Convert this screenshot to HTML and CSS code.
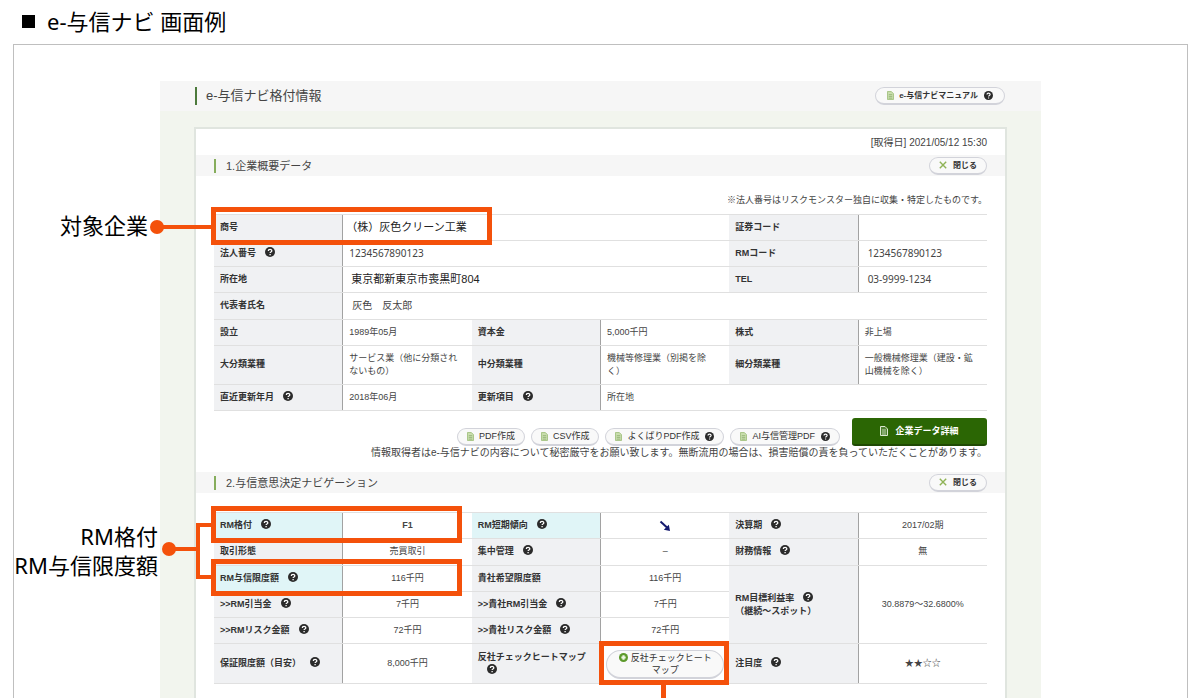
FILE: index.html
```html
<!DOCTYPE html>
<html lang="ja">
<head>
<meta charset="utf-8">
<meta name="viewport" content="width=device-width, initial-scale=1">
<title>e-与信ナビ 画面例</title>
<link rel="stylesheet" href="styles.css">
</head>
<body>
<svg class="defs" aria-hidden="true">
  <symbol id="help" viewBox="0 0 10 10"><circle cx="5" cy="5" r="5" fill="#2b2b2b"/><path d="M3.3 4C3.3 1.9 6.8 1.9 6.8 3.9C6.8 5 5.1 5 5.1 6.1M5.1 7.1V8.3" fill="none" stroke="#fff" stroke-width="1.3"/></symbol>
  <symbol id="doc" viewBox="0 0 8 10"><path d="M0.5 0.5H5L7.5 3V9.5H0.5Z" fill="#c9deae" stroke="#9fbf7c"/><path d="M2 4H6M2 6H6M2 8H6" stroke="#86a968" stroke-width="0.8"/></symbol>
  <symbol id="doc-light" viewBox="0 0 8 10"><path d="M0.5 0.5H5L7.5 3V9.5H0.5Z" fill="#4f8130" stroke="#dbe8d0"/><path d="M2 4H6M2 6H6M2 8H6" stroke="#dbe8d0" stroke-width="0.8"/></symbol>
  <symbol id="cross" viewBox="0 0 8 8"><path d="M0.8 0.8L7.2 7.2M7.2 0.8L0.8 7.2" stroke="#8fb356" stroke-width="1.4"/></symbol>
</svg>

<h1 class="page-title">e-与信ナビ 画面例</h1>

<div class="frame">
  <main class="screen">
    <header class="screen-head">
      <h2 class="screen-title">e-与信ナビ格付情報</h2>
      <button class="pill small" type="button"><svg class="doc"><use href="#doc"/></svg><b>e-与信ナビマニュアル</b><svg class="help"><use href="#help"/></svg></button>
    </header>

    <div class="panel">
      <p class="acquired">[取得日] 2021/05/12 15:30</p>

      <section>
        <header class="section-head">
          <h3 class="section-title">1.企業概要データ</h3>
          <button class="pill small close" type="button"><svg class="cross"><use href="#cross"/></svg><b>閉じる</b></button>
        </header>
        <div class="section-body">
          <p class="note number-note">※法人番号はリスクモンスター独自に収集・特定したものです。</p>
          <div class="annotated">
            <table class="data company">
              <colgroup><col><col><col><col><col><col></colgroup>
              <tr><th scope="row">商号</th><td colspan="3" class="name">（株）灰色クリーン工業</td><th scope="row">証券コード</th><td></td></tr>
              <tr><th scope="row">法人番号<svg class="help"><use href="#help"/></svg></th><td colspan="3" class="code">1234567890123</td><th scope="row">RMコード</th><td class="code inset">1234567890123</td></tr>
              <tr><th scope="row">所在地</th><td colspan="3" class="address">東京都新東京市喪黒町804</td><th scope="row">TEL</th><td class="code inset">03-9999-1234</td></tr>
              <tr><th scope="row">代表者氏名</th><td colspan="5" class="code person">灰色　反太郎</td></tr>
              <tr><th scope="row">設立</th><td>1989年05月</td><th scope="row">資本金</th><td>5,000千円</td><th scope="row">株式</th><td>非上場</td></tr>
              <tr class="two-line"><th scope="row">大分類業種</th><td>サービス業（他に分類されないもの）</td><th scope="row">中分類業種</th><td>機械等修理業（別掲を除く）</td><th scope="row">細分類業種</th><td>一般機械修理業（建設・鉱山機械を除く）</td></tr>
              <tr><th scope="row">直近更新年月<svg class="help"><use href="#help"/></svg></th><td>2018年06月</td><th scope="row">更新項目<svg class="help"><use href="#help"/></svg></th><td colspan="3">所在地</td></tr>
            </table>
            <div class="mark mark-company"></div>
            <div class="lead lead-company"></div>
            <p class="label label-company">対象企業</p>
          </div>

          <div class="actions">
            <button class="pill" type="button"><svg class="doc"><use href="#doc"/></svg>PDF作成</button>
            <button class="pill" type="button"><svg class="doc"><use href="#doc"/></svg>CSV作成</button>
            <button class="pill" type="button"><svg class="doc"><use href="#doc"/></svg>よくばりPDF作成<svg class="help"><use href="#help"/></svg></button>
            <button class="pill" type="button"><svg class="doc"><use href="#doc"/></svg>AI与信管理PDF<svg class="help"><use href="#help"/></svg></button>
            <button class="primary" type="button"><svg class="doc"><use href="#doc-light"/></svg>企業データ詳細</button>
          </div>
          <p class="note notice">情報取得者はe-与信ナビの内容について秘密厳守をお願い致します。無断流用の場合は、損害賠償の責を負っていただくことがあります。</p>
        </div>
      </section>

      <section class="decision">
        <header class="section-head">
          <h3 class="section-title">2.与信意思決定ナビゲーション</h3>
          <button class="pill small close" type="button"><svg class="cross"><use href="#cross"/></svg><b>閉じる</b></button>
        </header>
        <div class="section-body">
          <div class="annotated">
            <table class="data rating">
              <colgroup><col><col><col><col><col><col></colgroup>
              <tr><th scope="row" class="key">RM格付<svg class="help"><use href="#help"/></svg></th><td><b>F1</b></td><th scope="row" class="key">RM短期傾向<svg class="help"><use href="#help"/></svg></th><td><svg class="trend" viewBox="0 0 12 12" role="img" aria-label="下降"><path d="M1.5 1.5L8 7.5" stroke="#14196e" stroke-width="2"/><path d="M11 11L4.8 9.8L9.8 4.8Z" fill="#14196e"/></svg></td><th scope="row">決算期<svg class="help"><use href="#help"/></svg></th><td>2017/02期</td></tr>
              <tr><th scope="row">取引形態</th><td>売買取引</td><th scope="row">集中管理<svg class="help"><use href="#help"/></svg></th><td>–</td><th scope="row">財務情報<svg class="help"><use href="#help"/></svg></th><td>無</td></tr>
              <tr><th scope="row" class="key">RM与信限度額<svg class="help"><use href="#help"/></svg></th><td>116千円</td><th scope="row">貴社希望限度額</th><td>116千円</td><th scope="row" rowspan="3">RM目標利益率<svg class="help"><use href="#help"/></svg><br>（継続～スポット）</th><td rowspan="3">30.8879～32.6800%</td></tr>
              <tr><th scope="row">&gt;&gt;RM引当金<svg class="help"><use href="#help"/></svg></th><td>7千円</td><th scope="row">&gt;&gt;貴社RM引当金<svg class="help"><use href="#help"/></svg></th><td>7千円</td></tr>
              <tr><th scope="row">&gt;&gt;RMリスク金額<svg class="help"><use href="#help"/></svg></th><td>72千円</td><th scope="row">&gt;&gt;貴社リスク金額<svg class="help"><use href="#help"/></svg></th><td>72千円</td></tr>
              <tr class="two-line"><th scope="row">保証限度額（目安）<svg class="help"><use href="#help"/></svg></th><td>8,000千円</td><th scope="row">反社チェックヒートマップ<svg class="help"><use href="#help"/></svg></th><td class="heat"><button class="pill heatmap" type="button"><svg class="dot" viewBox="0 0 10 10"><circle cx="5" cy="5" r="5" fill="#5d9a2c"/><path d="M5 2.6V7.4M2.6 5H7.4" stroke="#eef6e4" stroke-width="2.4"/></svg>反社チェックヒート<br>マップ</button></td><th scope="row">注目度<svg class="help"><use href="#help"/></svg></th><td>★★☆☆</td></tr>
            </table>
            <div class="mark mark-grade"></div>
            <div class="mark mark-limit"></div>
            <div class="mark mark-heat"></div>
            <div class="bracket"></div>
            <div class="lead lead-rating"></div>
            <div class="stem"></div>
            <p class="label label-rating">RM格付<br>RM与信限度額</p>
          </div>
        </div>
      </section>
    </div>
  </main>
</div>
</body>
</html>
```

FILE: styles.css
```css
* { box-sizing: border-box; }

body {
  margin: 0;
  min-height: 100vh;
  display: flex;
  flex-direction: column;
  background: #fff;
  color: #444;
  font: 9px/13px "Liberation Sans", "Noto Sans CJK JP", sans-serif;
}

h1, h2, h3, p { margin: 0; font-weight: 400; }

.defs { position: absolute; width: 0; height: 0; }

.page-title {
  display: flex;
  align-items: center;
  gap: 12px;
  height: 44px;
  padding: 0 22px 2px;
  color: #000;
  font: 22px/30px "Noto Sans", "Noto Sans CJK JP", sans-serif;
}

.page-title::before {
  content: "";
  width: 13px;
  height: 13px;
  background: #000;
}

.frame {
  flex: 1;
  display: flex;
  flex-direction: column;
  margin: 0 12px 0 13px;
  padding: 36px 146px 0;
  border: 1px solid #bfbfbf;
  border-bottom: 0;
}

.screen {
  flex: 1;
  display: flex;
  flex-direction: column;
  background: #f2f5ee;
}

.screen-head {
  display: flex;
  align-items: center;
  justify-content: space-between;
  height: 30px;
  padding: 0 36px 0 35px;
  background: #f6f6f6;
}

.screen-title {
  padding-left: 9px;
  border-left: 2px solid #4c7a3c;
  font-size: 13px;
  line-height: 18px;
}

.panel {
  flex: 1;
  margin: 16px 34px 0;
  padding-bottom: 13px;
  border: 2px solid #e0e5df;
  border-bottom: 0;
  background: #fff;
}

.acquired {
  padding: 7px 18px 6px;
  font-size: 10px;
  text-align: right;
}

.section-head {
  display: flex;
  align-items: center;
  justify-content: space-between;
  height: 21px;
  padding: 0 18px;
  background: #f6f6f6;
}

.section-title {
  padding-left: 10px;
  border-left: 2px solid #86ad5c;
  font-size: 11px;
  line-height: 14px;
}

.section-body { padding: 0 18px; }

.note { text-align: right; }
.number-note { padding: 18px 0 7px; }
.notice { font-size: 10px; }

.pill {
  display: inline-flex;
  align-items: center;
  justify-content: center;
  height: 18px;
  padding: 0 9px;
  border: 1px solid #d2d3da;
  border-bottom-width: 2px;
  border-radius: 20px;
  background: #f9f9f9;
  color: #333;
  font: inherit;
  white-space: nowrap;
}

.small { padding: 0 11px; font-size: 8px; }
.close { width: 58px; padding: 0; }

svg { flex: none; }
.doc { width: 7px; height: 9px; margin-right: 5px; }
.cross { width: 8px; height: 8px; margin-right: 6px; }
.help { width: 9px; height: 9px; margin-left: 6px; }
.dot { width: 9px; height: 9px; margin-right: 3px; vertical-align: -1px; }
.trend { width: 12px; height: 12px; vertical-align: middle; }

.annotated { position: relative; }

.data {
  width: 100%;
  border-collapse: collapse;
  table-layout: fixed;
}

.company { height: 197px; }
.rating { height: 172px; }

.data tr { height: 26px; }
.data .two-line { height: 39px; }

.data th, .data td {
  padding: 0 10px 0 6px;
  border-top: 1px solid #e0e0e0;
  border-bottom: 1px solid #e0e0e0;
  text-align: left;
}

.data th {
  background: #f0f1f3;
  color: #333;
  font-weight: 700;
}

.data th .help {
  width: 10px;
  height: 10px;
  margin-left: 9px;
  vertical-align: -1px;
}

.data td { border-left: 1px solid #a2a2a2; }
.data .key { background: #e0f5f7; }
.rating td { padding: 0 6px; text-align: center; }

.data .name, .data .address { color: #222; font-size: 11px; padding-left: 8px; }
.data .name { padding-left: 3px; }
.data .code { font: 10px/13px "Noto Sans", "Noto Sans CJK JP", sans-serif; }
.data .inset, .data .person { padding-left: 9px; }
.data .heat { padding: 2px 5px 0; }

.heatmap {
  display: block;
  width: 100%;
  height: 29px;
  padding: 0;
  line-height: 12px;
}

.actions {
  display: flex;
  align-items: flex-end;
  justify-content: flex-end;
  gap: 6px;
  padding-top: 7px;
}

.primary {
  display: flex;
  align-items: center;
  justify-content: center;
  width: 135px;
  height: 28px;
  margin-left: 6px;
  padding: 0;
  border: 0;
  border-bottom: 2px solid #1f4a04;
  border-radius: 3px;
  background: #2b6604;
  color: #fff;
  font: inherit;
  font-weight: 700;
}

.primary .doc { width: 8px; height: 10px; margin-right: 7px; }

.decision { padding-top: 13px; }
.decision .section-body { padding-top: 19px; }

/* Callouts drawn over the tables */
.mark, .lead, .bracket, .stem, .label { position: absolute; }

.mark { left: -3px; border: 5px solid #f4510b; }
.mark-company { top: -7px; width: 281px; height: 38px; }
.mark-grade { top: -6px; width: 251px; height: 37px; }
.mark-limit { top: 47px; width: 251px; height: 37px; }
.mark-heat { top: 129px; left: calc(50% - 2px); width: 130px; height: 44px; }

.lead { height: 4px; background: #f4510b; }
.lead::before {
  content: "";
  position: absolute;
  top: -5px;
  left: -8px;
  width: 14px;
  height: 14px;
  border-radius: 50%;
  background: #f4510b;
}
.lead-company { top: 11px; left: -56px; width: 54px; }
.lead-rating { top: 35px; left: -44px; width: 26px; }

.bracket {
  top: 11px;
  left: -18px;
  width: 17px;
  height: 56px;
  border: 4px solid #f4510b;
  border-right: 0;
}

.stem {
  top: 172px;
  left: calc(58% - 1px);
  width: 5px;
  height: 14px;
  background: #f4510b;
}

.label {
  color: #000;
  font: 22px/29px "Noto Sans", "Noto Sans CJK JP", sans-serif;
  text-align: right;
  white-space: nowrap;
}
.label-company { top: -3px; right: calc(100% + 66px); }
.label-rating { top: 10px; right: calc(100% + 56px); }
```
